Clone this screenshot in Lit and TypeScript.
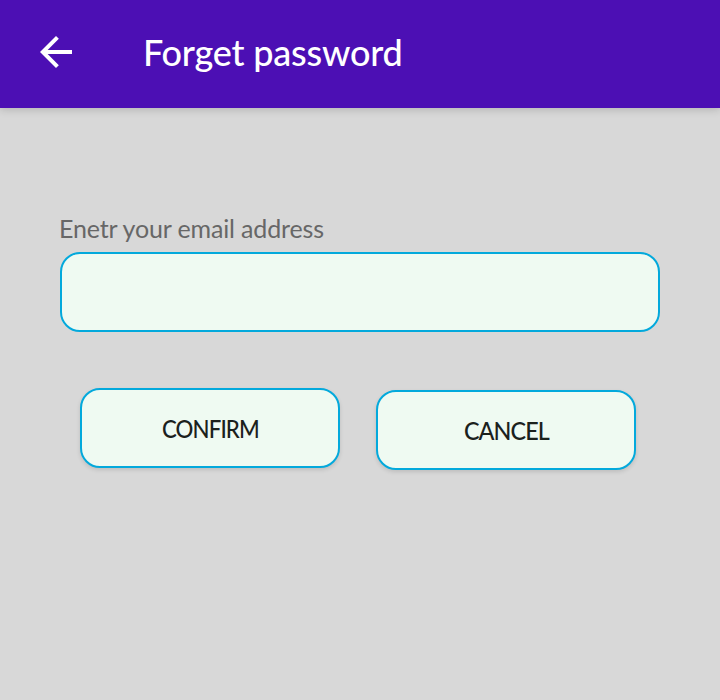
import { LitElement, html, css } from "lit";
import { customElement } from "lit/decorators.js";

@customElement("app-root")
export class AppRoot extends LitElement {
  static styles = css`
    :host {
      display: flex;
      flex-direction: column;
      box-sizing: border-box;
      height: 700px;
      background: #d8d8d8;
      font-family: Lato, "Open Sans", sans-serif;
      overflow: hidden;
    }
    * {
      box-sizing: border-box;
    }
    .bar {
      display: flex;
      align-items: center;
      height: 108px;
      flex: none;
      padding: 0 32px 4px;
      background: #4c0fb4;
      box-shadow: 0 2px 8px rgba(0, 0, 0, 0.16);
    }
    .back {
      display: flex;
      padding: 0;
      border: 0;
      background: none;
      color: #fff;
    }
    .back svg {
      width: 48px;
      height: 48px;
      fill: currentColor;
    }
    .title {
      margin: 0 0 0 63px;
      color: #fff;
      font-size: 36px;
      font-weight: 500;
      line-height: 48px;
      letter-spacing: -0.2px;
      white-space: nowrap;
    }
    .form {
      display: flex;
      flex-direction: column;
      padding: 105px 60px 0;
    }
    .label {
      height: 39px;
      line-height: 30px;
      font-size: 25px;
      letter-spacing: -0.15px;
      text-indent: -1px;
      color: #676767;
      white-space: nowrap;
    }
    .field,
    .button {
      height: 80px;
      border: 2px solid #03a9dc;
      border-radius: 20px;
      background: #effaf2;
      font-family: inherit;
      outline: none;
    }
    .field {
      width: 600px;
      padding: 0 20px;
      font-size: 25px;
    }
    .actions {
      display: flex;
      gap: 36px;
      padding: 56px 20px 0;
    }
    .button {
      flex: none;
      width: 260px;
      padding: 0;
      font-size: 25px;
      font-weight: 500;
      color: #1b211d;
      letter-spacing: -1px;
      box-shadow: 0 2px 4px rgba(0, 0, 0, 0.12);
    }
    .button span {
      display: inline-block;
    }
    .confirm span {
      transform: scaleX(0.89);
    }
    .cancel {
      margin-top: 2px;
    }
    .cancel span {
      transform: scaleX(0.935);
    }
  `;

  render() {
    return html`
      <header class="bar">
        <button class="back" aria-label="Back">
          <svg viewBox="0 0 24 24">
            <path d="M20 11H7.83l5.59-5.59L12 4l-8 8 8 8 1.41-1.41L7.83 13H20v-2z" />
          </svg>
        </button>
        <div class="title">Forget password</div>
      </header>
      <main class="form">
        <label class="label" for="email">Enetr your email address</label>
        <input class="field" id="email" type="email" />
        <div class="actions">
          <button class="button confirm"><span>CONFIRM</span></button>
          <button class="button cancel"><span>CANCEL</span></button>
        </div>
      </main>
    `;
  }
}
